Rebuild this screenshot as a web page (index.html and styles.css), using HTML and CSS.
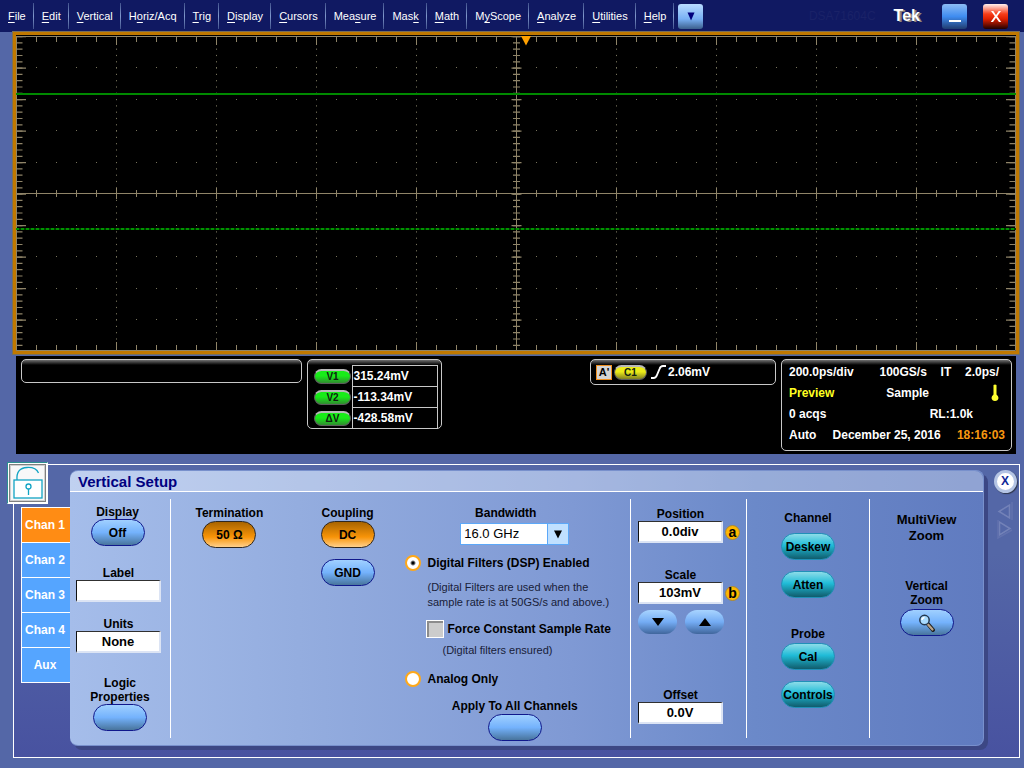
FILE: index.html
```html
<!DOCTYPE html>
<html lang="en">
<head>
<meta charset="utf-8">
<meta name="viewport" content="width=device-width, initial-scale=1">
<title>Vertical Setup</title>
<link rel="stylesheet" href="styles.css">
</head>
<body>
<header class="menubar">
  <nav class="menus" aria-label="Main menu">
    <button type="button" class="menu"><u>F</u>ile</button>
    <button type="button" class="menu"><u>E</u>dit</button>
    <button type="button" class="menu"><u>V</u>ertical</button>
    <button type="button" class="menu">H<u>o</u>riz/Acq</button>
    <button type="button" class="menu"><u>T</u>rig</button>
    <button type="button" class="menu"><u>D</u>isplay</button>
    <button type="button" class="menu"><u>C</u>ursors</button>
    <button type="button" class="menu">Mea<u>s</u>ure</button>
    <button type="button" class="menu">Mas<u>k</u></button>
    <button type="button" class="menu"><u>M</u>ath</button>
    <button type="button" class="menu">M<u>y</u>Scope</button>
    <button type="button" class="menu"><u>A</u>nalyze</button>
    <button type="button" class="menu"><u>U</u>tilities</button>
    <button type="button" class="menu"><u>H</u>elp</button>
    <button type="button" class="chrome more" aria-label="More menus"><svg width="8" height="9" viewBox="0 0 8 9"><path d="M0.500 0.500H7.500L4 8.500Z" fill="#00007c"/></svg></button>
  </nav>
  <div class="brand">
    <span class="model">DSA71604C</span>
    <span class="logo">Tek</span>
    <button type="button" class="chrome minimize" aria-label="Minimize"><svg width="12" height="14" viewBox="0 0 12 14"><rect x="0" y="11" width="12" height="2" fill="#fff"/></svg></button>
    <button type="button" class="chrome close" aria-label="Close"><svg width="12" height="12" viewBox="0 0 12 12"><path d="M1 1H3.300L6 4.900 8.700 1H11L7.200 6.300 11.300 12H9L6 7.700 3 12H.7L4.800 6.300Z" fill="#fff"/></svg></button>
  </div>
</header>

<main>
  <section class="frame" aria-label="Waveform display">
    <svg class="graticule" viewBox="0 0 1000 315" fill="none">
      <g stroke="#77735c">
        <path d="M0 31.500H1000M0 63.500H1000M0 94.500H1000M0 126.500H1000M0 189.500H1000M0 220.500H1000M0 252.500H1000M0 283.500H1000" stroke-dasharray="1 19"/>
        <path d="M100.500 0V315M200.500 0V315M300.500 0V315M400.500 0V315M600.500 0V315M700.500 0V315M800.500 0V315M900.500 0V315" stroke-dasharray="1.200 5.100"/>
      </g>
      <g stroke="#8f8468">
        <path d="M0 3H1000M0 312H1000" stroke-width="6" stroke-dasharray="1 19"/>
        <path d="M0 4.500H1000M0 310.500H1000" stroke-width="9" stroke-dasharray="1 99"/>
        <path d="M3 0V315M997 0V315M500.500 0V315" stroke-width="7" stroke-dasharray="1.200 5.100"/>
        <path d="M5 0V315M995 0V315M500.500 0V315" stroke-width="10" stroke-dasharray="1.200 30.300"/>
        <path d="M0 157.500H1000" stroke-width="7" stroke-dasharray="1 19"/>
        <path d="M0 157.500H1000" stroke-width="11" stroke-dasharray="1 99"/>
        <path d="M0 157.500H1000M500.500 0V315"/>
        <path d="M.5 .5H999.500V314.500H.5Z"/>
      </g>
      <path d="M0 58H1000" stroke="#008a00" stroke-width="2"/>
      <path d="M0 193H1000" stroke="#003c00" stroke-width="2"/>
      <path d="M0 193H1000" stroke="#009400" stroke-width="2" stroke-dasharray="3 2"/>
      <path d="M505 0H515L510 9.500Z" fill="#ffa000"/>
    </svg>
  </section>

  <section class="readouts" aria-label="Readouts">
    <div class="readout blank"></div>
    <div class="readout cursors">
      <table class="values">
        <tr><th scope="row"><span class="tag green">V1</span></th><td>315.24mV</td></tr>
        <tr><th scope="row"><span class="tag green">V2</span></th><td>-113.34mV</td></tr>
        <tr><th scope="row"><span class="tag green">ΔV</span></th><td>-428.58mV</td></tr>
      </table>
    </div>
    <div class="readout trigger">
      <span class="event">A'</span>
      <span class="tag yellow">C1</span>
      <svg width="15" height="14" viewBox="0 0 15 14"><path d="M0 13H2.500Q5 13 6 10L8.500 4Q9.500 1 12 1H15" fill="none" stroke="#fff" stroke-width="1.900"/></svg>
      <span>2.06mV</span>
    </div>
    <div class="readout status">
      <div class="status-row"><span>200.0ps/div</span><span class="rate">100GS/s</span><span>IT</span><span>2.0ps/</span></div>
      <div class="status-row"><span class="preview">Preview</span><span class="mode">Sample</span>
        <svg width="8" height="18" viewBox="0 0 8 18"><path d="M2.500 1Q4 0 5.500 1V10.500Q7.500 12 7.500 14 7 17 4 17 1 17 .5 14 .5 12 2.500 10.500Z" fill="#ffff30"/></svg></div>
      <div class="status-row acqs"><span>0 acqs</span><span>RL:1.0k</span></div>
      <div class="status-row"><span>Auto</span><span>December 25, 2016</span><span class="clock">18:16:03</span></div>
    </div>
  </section>

  <section class="dock">
    <button type="button" class="lock" aria-label="Unlock controls"><svg width="30" height="34" viewBox="0 0 30 34" fill="none" stroke="#12a4c4" stroke-width="1.300"><rect x="1" y="14" width="28" height="18" fill="#fff"/><path d="M4 14Q3 2 14 1.500 23 1 25.500 7"/><circle cx="15.500" cy="20.500" r="2.500"/><path d="M15.500 23V29"/></svg></button>
    <nav class="tabs" aria-label="Channels">
      <button type="button" class="tab active">Chan 1</button>
      <button type="button" class="tab">Chan 2</button>
      <button type="button" class="tab">Chan 3</button>
      <button type="button" class="tab">Chan 4</button>
      <button type="button" class="tab">Aux</button>
    </nav>

    <form class="panel">
      <h1 class="title">Vertical Setup</h1>
      <div class="columns">
        <div class="column general">
          <div class="field display"><span id="display">Display</span><button type="button" class="pill" aria-labelledby="display">Off</button></div>
          <div class="field name"><label for="label">Label</label><input id="label" class="box" type="text"></div>
          <div class="field"><label for="units">Units</label><input id="units" class="box" type="text" value="None"></div>
          <div class="field last"><span id="logic">Logic<br>Properties</span><button type="button" class="pill" aria-labelledby="logic"></button></div>
        </div>

        <div class="column input">
          <div class="field"><span>Termination</span><button type="button" class="pill amber">50 Ω</button></div>
          <div class="field coupling"><span>Coupling</span><button type="button" class="pill amber">DC</button><button type="button" class="pill gnd">GND</button></div>
          <div class="bandwidth">
            <div class="field">
              <label class="bw-label" for="bw">Bandwidth</label>
              <span class="combo"><select id="bw"><option>16.0 GHz</option></select><svg width="8" height="9" viewBox="0 0 8 9"><path d="M0 0.500H8L4 8.500Z" fill="#000"/></svg></span>
            </div>
            <label class="choice dsp"><input type="radio" name="filter" checked>Digital Filters (DSP) Enabled</label>
            <p class="hint">(Digital Filters are used when the<br>sample rate is at 50GS/s and above.)</p>
            <label class="choice force"><input type="checkbox">Force Constant Sample Rate</label>
            <p class="hint ensured">(Digital filters ensured)</p>
            <label class="choice analog"><input type="radio" name="filter">Analog Only</label>
            <div class="field apply"><span id="apply">Apply To All Channels</span><button type="button" class="pill" aria-labelledby="apply"></button></div>
          </div>
        </div>

        <div class="column scale">
          <div class="knob-field"><label for="position">Position</label><input id="position" class="box" type="text" value="0.0div"><span class="knob">a</span></div>
          <div class="knob-field second"><label for="scale">Scale</label><input id="scale" class="box" type="text" value="103mV"><span class="knob">b</span></div>
          <div class="steps">
            <button type="button" class="step" aria-label="Decrease scale"><svg width="12" height="8" viewBox="0 0 12 8"><path d="M0 0H12L6 8Z"/></svg></button>
            <button type="button" class="step" aria-label="Increase scale"><svg width="12" height="8" viewBox="0 0 12 8"><path d="M0 8H12L6 0Z"/></svg></button>
          </div>
          <div class="knob-field offset"><label for="offset">Offset</label><input id="offset" class="box" type="text" value="0.0V"></div>
        </div>

        <div class="column probe">
          <div class="field"><span>Channel</span><button type="button" class="pill teal">Deskew</button><button type="button" class="pill teal">Atten</button></div>
          <div class="field second"><span>Probe</span><button type="button" class="pill teal">Cal</button><button type="button" class="pill teal">Controls</button></div>
        </div>

        <div class="column zoom">
          <h2 class="multiview">MultiView<br>Zoom</h2>
          <div class="field"><span id="vzoom">Vertical<br>Zoom</span><button type="button" class="pill" aria-labelledby="vzoom"><svg width="18" height="18" viewBox="0 0 18 18"><path d="M9.500 9.500L15 16" stroke="#202020" stroke-width="4" stroke-linecap="round"/><path d="M10 10.500L14.500 15.500" stroke="#b9a58c" stroke-width="2.200" stroke-linecap="round"/><circle cx="6.500" cy="6" r="4.700" fill="#a9dcff" stroke="#24384e" stroke-width="1.500"/><path d="M4 6Q4 4 6.500 3.500" fill="none" stroke="#fff" stroke-width="1.500"/></svg></button></div>
        </div>
      </div>
    </form>

    <div class="side">
      <button type="button" class="dismiss" aria-label="Close panel">X</button>
      <svg width="16" height="37" viewBox="0 0 16 37" fill="none" stroke-width="1.500"><path d="M12.500 3V16L2 9.500Z" stroke="#7382b8"/><path d="M15 0V18" stroke="#6272ae"/><path d="M2.500 20V33L13 26.500Z" stroke="#7382b8"/><path d="M1 18V36L15 28" stroke="#6272ae"/></svg>
    </div>
  </section>
</main>
</body>
</html>
```
FILE: styles.css
```css
* { box-sizing: border-box; }

body {
  margin: 0;
  min-height: 100vh;
  background: #5467a7;
  color: #000;
  font: bold 12px/14px "Liberation Sans", Arial, sans-serif;
}

button, input, select { margin: 0; font: inherit; color: inherit; }
button { padding: 0; border: 0; background: none; }
svg { display: block; }

/* Menu bar */
.menubar {
  display: flex;
  justify-content: space-between;
  align-items: center;
  height: 32px;
  background: #101962;
  color: #fff;
}
.menus { display: flex; align-items: center; }
.menu {
  height: 26px;
  padding: 0 7px 0 8px;
  border: solid;
  border-width: 0 1px 0 0;
  border-image: linear-gradient(#3c4c88, #8098cc, #3c4c88) 1;
  font-weight: normal;
  font-size: 11px;
  white-space: nowrap;
}
.menu u { text-underline-offset: 2px; }
.chrome {
  display: flex;
  justify-content: center;
  align-items: center;
  width: 25px;
  height: 25px;
  border-radius: 3px;
}
.more { margin-left: 4px; background: linear-gradient(#b9dcff, #78b0f4 60%, #3c5f8c); }
.brand { display: flex; align-items: center; padding-right: 16px; }
.model { color: #1a2268; font-weight: normal; margin-right: 18px; }
.logo { font-size: 16px; line-height: 20px; text-shadow: 2px 1px 0 #8c8478; margin-right: 22px; }
.minimize { background: linear-gradient(#8cbcf4, #3f8cf0 50%, #203c70); margin-right: 16px; }
.close { background: linear-gradient(#fff0f0, #f83c18 40%, #e02000 60%, #200000); }

/* Waveform display */
.frame {
  margin: 0 5px 0 13px;
  border: 3px solid #c07800;
  outline: 1px solid #77705c;
  padding: 1px 0 0;
  background: #000;
}
.graticule { width: 100%; height: auto; }

/* Readouts */
.readouts {
  display: flex;
  align-items: flex-start;
  gap: 5px;
  margin: 2px 8px 0 16px;
  padding: 3px 4px 3px 5px;
  min-height: 98px;
  background: #000;
  color: #fff;
}
.readout {
  border: 1px solid #c8c8c8;
  border-radius: 5px;
  background: linear-gradient(#707070, #000 5px);
}
.blank { width: 281px; height: 24px; }
.cursors { width: 135px; height: 70px; padding: 5px 3px 0 6px; }
.values { width: 100%; border-collapse: collapse; }
.values th { padding: 0; width: 38px; }
.values td { height: 21px; padding: 0 1px; border: 1px solid #c8c8c8; }
.values tr:last-child td { border-bottom: 0; }
.tag {
  display: block;
  width: 37px;
  height: 15px;
  border: 1px solid #5c5c5c;
  border-top: 2px solid #b8b8b8;
  border-radius: 8px;
  color: #102010;
  font-size: 10px;
  line-height: 12px;
  text-align: center;
}
.green { background: linear-gradient(#18ec18 40%, #308c30); }
.yellow { width: 33px; background: linear-gradient(#ecec18 40%, #808020); }
.trigger {
  display: flex;
  align-items: center;
  gap: 2px;
  width: 186px;
  height: 26px;
  margin-left: auto;
  padding-left: 5px;
}
.trigger svg { margin-left: 2px; }
.event {
  width: 16px;
  height: 15px;
  border: 1px solid #f09020;
  background: #d4d4d4;
  color: #000;
  font-size: 11px;
  text-align: center;
  line-height: 13px;
}
.status { width: 231px; padding: 1px 6px 5px 7px; }
.status-row {
  display: flex;
  justify-content: space-between;
  align-items: center;
  height: 21px;
  padding-right: 6px;
  white-space: nowrap;
}
.status-row:last-child { padding-right: 0; }
.status-row.acqs { padding-right: 32px; }
.rate { margin-left: 12px; }
.mode { margin-right: 10px; }
.preview { color: #ffff20; }
.clock { color: #f89810; }

/* Setup dock */
.dock {
  position: relative;
  display: flex;
  margin: 10px 4px 9px 13px;
  border: 1px solid #fff;
  padding: 5px 0 11px 7px;
  background: linear-gradient(#5467a7 30%, #4852a0);
}
.lock {
  position: absolute;
  top: -3px;
  left: -7px;
  display: flex;
  justify-content: center;
  align-items: center;
  width: 41px;
  height: 42px;
  border: 1px solid #fff;
  border-top-color: #2c9090;
  border-left-color: #2c9090;
  box-shadow: inset 0 0 0 1px #fff, inset 0 0 0 2px #808080, inset 0 0 0 3px #d0d0d0;
  background: #f8f8f8;
}
.tabs { width: 49px; padding-top: 37px; }
.tab {
  display: block;
  width: 100%;
  height: 35px;
  padding-right: 2px;
  border: solid #fff;
  border-width: 1px 0 0 1px;
  background: #55a5ff;
  color: #fff;
}
.tab:last-child { height: 36px; border-bottom-width: 1px; }
.active { background: #ff8c14; }
.panel {
  flex: 1;
  min-width: 0;
  border: 1px solid #7890cc;
  border-left: 0;
  border-radius: 8px;
  background: linear-gradient(90deg, #a5bdea, #94addf 25%, #7f99d4 55%, #6b89c9 75%, #607bc0);
  box-shadow: 4px 4px 0 #3c4784;
}
.title {
  margin: 0;
  padding: 2px 8px 1px;
  border-bottom: 1px solid #fff;
  border-radius: 8px 8px 0 0;
  background: rgba(255, 255, 255, .3);
  color: #000080;
  font-size: 15px;
  line-height: 17px;
}
.columns {
  display: grid;
  grid-template-columns: 101fr 460fr 116fr 123fr 113fr;
  padding: 7px 0;
}
.column { min-height: 239px; border-right: 1px solid #fff; }
.column:last-child { border-right: 0; }
.field { display: flex; flex-direction: column; align-items: center; text-align: center; gap: 1px; }
.pill {
  display: flex;
  justify-content: center;
  align-items: center;
  width: 54px;
  height: 27px;
  border: 1px solid #10188c;
  border-radius: 14px;
  background: linear-gradient(#a0d0ff, #74b2fc 50%, #48749c);
  white-space: nowrap;
}
.amber { border-color: #302820; background: linear-gradient(#a86400, #f89408 60%, #ffd08c); }
.teal { border-color: #2090b8; background: linear-gradient(#8cdce8, #20bcd8 45%, #105c6c); }
.box {
  width: 85px;
  height: 22px;
  padding: 0;
  border: solid;
  border-color: #303030 #dce4f4 #dce4f4 #101010;
  border-width: 1px 2px 2px 1px;
  background: #fff;
  font-size: 13px;
  text-align: center;
}

.general { display: flex; flex-direction: column; gap: 15px; padding-top: 6px; }
.general .field { gap: 0; padding-right: 3px; }
.general .display { padding-right: 5px; }
.general .name { padding-top: 5px; }
.general .last { padding: 8px 0 0; }

.input { display: grid; grid-template-columns: 117fr 117fr 226fr; padding-top: 7px; }
.coupling { padding-left: 3px; }
.gnd { margin-top: 10px; }
.bandwidth { display: flex; flex-direction: column; margin-bottom: -4px; }
.bandwidth > .field { padding-right: 5px; gap: 3px; }
.bw-label { padding-right: 18px; }
.combo {
  display: flex;
  align-items: center;
  width: 109px;
  height: 22px;
  border: 1px solid #5ca8f8;
  background: linear-gradient(90deg, #fff 86px, #5ca8f8 86px, #5ca8f8 87px, #c0e0ff 87px);
}
.combo select {
  flex: 1;
  height: 20px;
  padding: 0 3px;
  border: 0;
  appearance: none;
  background: none;
  font-weight: normal;
  font-size: 13px;
}
.combo svg { margin-right: 6px; }
.choice { display: flex; align-items: center; gap: 6px; white-space: nowrap; }
.choice input { appearance: none; flex: none; }
.choice input[type="radio"] {
  width: 16px;
  height: 16px;
  border: 2px solid #ffa818;
  border-radius: 50%;
  background: #fff;
}
.choice input[type="radio"]:checked { background: radial-gradient(circle, #000 1px, #fff 3px); }
.choice input[type="checkbox"] {
  width: 18px;
  height: 18px;
  border: 1px solid #fff;
  background: #ccc;
  box-shadow: inset 2px 2px 0 #8c8c8c;
}
.dsp, .analog { padding-left: 1px; }
.dsp { margin-top: 10px; }
.hint {
  margin: 9px 0 0 23px;
  color: #182038;
  font-weight: normal;
  font-size: 11px;
  line-height: 15px;
  white-space: nowrap;
}
.choice.force { gap: 3px; margin: 10px 0 0 22px; }
.hint.ensured { margin: 5px 0 0 38px; }
.analog { margin-top: 13px; }
.bandwidth > .apply { margin-top: 12px; gap: 1px; }

.scale { padding: 8px 0 0 7px; }
.knob-field {
  display: grid;
  grid-template-columns: 85px 15px;
  column-gap: 2px;
  align-items: center;
}
.knob-field label { grid-column: 1 / -1; width: 85px; text-align: center; }
.knob {
  width: 15px;
  height: 15px;
  border: 1px solid #a88838;
  border-radius: 50%;
  background: #ffb800;
  font-size: 14px;
  line-height: 12px;
  text-align: center;
}
.knob-field.second { margin-top: 25px; }
.steps { display: flex; justify-content: space-between; width: 86px; margin-top: 6px; }
.step {
  display: flex;
  justify-content: center;
  align-items: center;
  width: 39px;
  height: 24px;
  border-radius: 12px;
  background: linear-gradient(#a8d4ff, #74acf4 50%, #40669c);
}
.offset { margin-top: 54px; }

.probe { padding-top: 12px; }
.probe .field { gap: 8px; }
.probe .pill + .pill { margin-top: 3px; }
.probe .second { gap: 2px; margin-top: 29px; }
.probe .second .pill + .pill { margin-top: 9px; }

.zoom { padding-top: 13px; }
.multiview { margin: 0 0 35px; font-size: 13px; line-height: 16px; text-align: center; }
.zoom .field { gap: 2px; }

.side {
  display: flex;
  flex-direction: column;
  align-items: center;
  gap: 9px;
  width: 35px;
  padding-left: 7px;
}
.dismiss {
  width: 23px;
  height: 23px;
  border: 3px solid #b4c4e4;
  border-radius: 50%;
  background: #fff;
  box-shadow: 1px 1px 1px #303850;
  color: #102898;
  line-height: 17px;
}
```
